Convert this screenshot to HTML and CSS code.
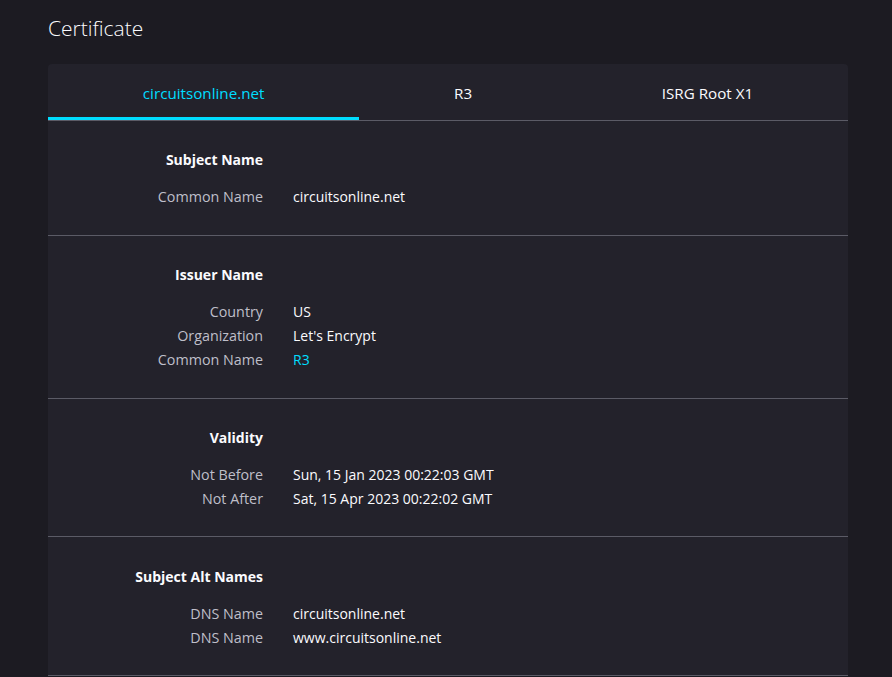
FILE: index.html
```html
<!DOCTYPE html>
<html lang="en">
<head>
<meta charset="utf-8">
<title>Certificate</title>
<link rel="stylesheet" href="styles.css">
</head>
<body>
<main class="page">
  <h1 class="title">Certificate</h1>
  <section class="card">
    <nav class="tabs">
      <div class="tab active">circuitsonline.net</div>
      <div class="tab">R3</div>
      <div class="tab">ISRG Root X1</div>
    </nav>
    <div class="group">
      <div class="head">Subject Name</div><div></div>
      <div class="rows">
        <div class="label">Common Name</div><div class="value">circuitsonline.net</div>
      </div>
    </div>
    <div class="group">
      <div class="head">Issuer Name</div><div></div>
      <div class="rows">
        <div class="label">Country</div><div class="value">US</div>
        <div class="label">Organization</div><div class="value">Let's Encrypt</div>
        <div class="label">Common Name</div><div class="value link">R3</div>
      </div>
    </div>
    <div class="group">
      <div class="head">Validity</div><div></div>
      <div class="rows">
        <div class="label">Not Before</div><div class="value">Sun, 15 Jan 2023 00:22:03 GMT</div>
        <div class="label">Not After</div><div class="value">Sat, 15 Apr 2023 00:22:02 GMT</div>
      </div>
    </div>
    <div class="group last">
      <div class="head">Subject Alt Names</div><div></div>
      <div class="rows">
        <div class="label">DNS Name</div><div class="value">circuitsonline.net</div>
        <div class="label">DNS Name</div><div class="value">www.circuitsonline.net</div>
      </div>
    </div>
  </section>
</main>
</body>
</html>
```

FILE: styles.css
```css
* { box-sizing: border-box; }
html, body {
  margin: 0;
  padding: 0;
  background: #1c1b22;
  color: #fbfbfe;
  font-family: "Open Sans", "Noto Sans", sans-serif;
  font-size: 14px;
}
.page {
  padding: 0 44px 0 48px;
}
.title {
  margin: 0;
  padding-top: 12px;
  height: 64px;
  font-size: 21px;
  font-weight: 300;
  line-height: 32px;
  color: #fbfbfe;
}
.card {
  background: #23222b;
  border-radius: 4px 4px 0 0;
  overflow: hidden;
}
.tabs {
  display: flex;
  border-bottom: 1px solid #5b5b66;
}
.tab {
  flex: 1 1 auto;
  height: 56px;
  padding-top: 2px;
  text-align: center;
  font-size: 15.2px;
  line-height: 54px;
  color: #fbfbfe;
  white-space: nowrap;
}
.tab.active {
  color: #00ddff;
  box-shadow: inset 0 -3px 0 #00ddff;
}
.group {
  display: grid;
  grid-template-columns: 215px 1fr;
  column-gap: 30px;
  padding: 27px 0 25px;
  border-bottom: 1px solid #5b5b66;
}
.group:nth-child(2),
.group:nth-child(3) {
  padding-bottom: 26px;
}
.group.last {
  padding-top: 28px;
}
.head {
  text-align: right;
  font-weight: 700;
  line-height: 24px;
  margin-bottom: 13px;
}
.rows {
  grid-column: 1 / 3;
  display: grid;
  grid-template-columns: 215px 1fr;
  column-gap: 30px;
}
.label {
  text-align: right;
  color: #bfbfc9;
  font-size: 14.3px;
  line-height: 24px;
}
.value {
  line-height: 24px;
  color: #fbfbfe;
}
.value.link {
  color: #00ddff;
}
```
